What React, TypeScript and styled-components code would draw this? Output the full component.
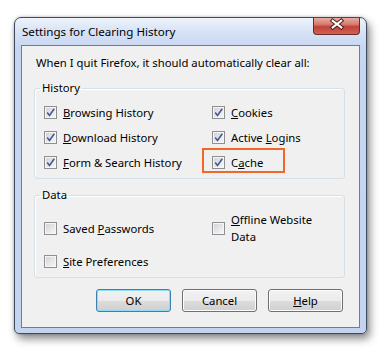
import React from "react";
import styled, { createGlobalStyle } from "styled-components";

const GlobalStyle = createGlobalStyle`
  html, body {
    margin: 0;
    padding: 0;
    background: #fff;
  }
  body {
    font-family: "Noto Sans", "Open Sans", sans-serif;
    font-size: 11.3px;
    color: #000;
  }
`;

const historyItems = [
  { pre: "", key: "B", post: "rowsing History" },
  { pre: "", key: "C", post: "ookies" },
  { pre: "", key: "D", post: "ownload History" },
  { pre: "Active ", key: "L", post: "ogins" },
  { pre: "", key: "F", post: "orm & Search History" },
  { pre: "C", key: "a", post: "che", highlight: true },
];

const CheckMark = () => (
  <svg width="11" height="11" viewBox="0 0 11 11">
    <path d="M2.2 5.6 L4.5 8.4 L9.3 1.8" fill="none" stroke="#465894" strokeWidth="1.6" />
  </svg>
);

const CloseGlyph = () => (
  <svg width="47" height="17" viewBox="0 0 47 17">
    <g strokeLinecap="square">
      <path d="M19.5 3.5 L28.5 10.5 M28.5 3.5 L19.5 10.5" stroke="#4a1814" strokeWidth="4.2" />
      <path d="M19.5 3.5 L28.5 10.5 M28.5 3.5 L19.5 10.5" stroke="#fff" strokeWidth="2.2" />
    </g>
  </svg>
);

const CheckItem = ({ checked, pre, accel, post, highlight }) => (
  <Item $highlight={highlight}>
    <Box>{checked && <CheckMark />}</Box>
    <ItemText>
      {pre}
      <u>{accel}</u>
      {post}
    </ItemText>
  </Item>
);

const App = () => {
  return (
    <>
      <GlobalStyle />
      <Page>
        <Window>
          <TitleBar>
            <Title>Settings for Clearing History</Title>
            <CloseButton>
              <CloseGlyph />
            </CloseButton>
          </TitleBar>
          <Client>
            <Intro>When I quit Firefox, it should automatically clear all:</Intro>
            <Group>
              <Legend>History</Legend>
              <HistoryGrid>
                {historyItems.map((item, index) => (
                  <CheckItem
                    key={index}
                    checked
                    pre={item.pre}
                    accel={item.key}
                    post={item.post}
                    highlight={item.highlight}
                  />
                ))}
              </HistoryGrid>
            </Group>
            <DataGroup>
              <Legend>Data</Legend>
              <DataGrid>
                <CheckItem pre="Saved " accel="P" post="asswords" />
                <CheckItem
                  pre=""
                  accel="O"
                  post={
                    <>
                      ffline Website
                      <br />
                      Data
                    </>
                  }
                />
                <CheckItem pre="" accel="S" post="ite Preferences" />
              </DataGrid>
            </DataGroup>
            <ButtonRow>
              <DialogButton $default>OK</DialogButton>
              <DialogButton>Cancel</DialogButton>
              <DialogButton>
                <u>H</u>elp
              </DialogButton>
            </ButtonRow>
          </Client>
        </Window>
      </Page>
    </>
  );
};

const Page = styled.div`
  padding: 17px 0 20px 14px;
`;

const Window = styled.div`
  width: 353px;
  box-sizing: border-box;
  border: 1px solid #3f4a5c;
  border-radius: 7px 7px 5px 5px;
  background: linear-gradient(#eef3fb 0px, #d6e2f5 14px, #c7d6f1 30px, #c4d3f0 100%);
  box-shadow: 3px 5px 9px rgba(0, 0, 0, 0.45), 0 0 3px rgba(0, 0, 0, 0.25);
`;

const TitleBar = styled.div`
  display: flex;
  justify-content: space-between;
  align-items: flex-start;
  height: 27px;
`;

const Title = styled.div`
  padding: 6px 0 0 7px;
  line-height: 16px;
  font-size: 11.6px;
`;

const CloseButton = styled.div`
  width: 47px;
  height: 17px;
  margin-right: 6px;
  box-sizing: border-box;
  border: 1px solid #6b2a24;
  border-top: none;
  border-radius: 0 0 4px 4px;
  background: linear-gradient(#e9aba2 0%, #d67a6f 40%, #c24236 55%, #cf6258 100%);
  display: flex;
  align-items: center;
  justify-content: center;

  svg {
    margin-top: -1px;
  }
`;

const Client = styled.div`
  margin: 0 6px 5px 6px;
  border: 1px solid #6d7c9c;
  background: #f0f0f0;
  padding: 0 14px 15px 12px;
`;

const Intro = styled.div`
  margin: 9px 0 9px 2px;
  line-height: 16px;
`;

const Group = styled.fieldset`
  margin: 0;
  padding: 4px 9px 3px 9px;
  border: 1px solid #d5dfe5;
  border-radius: 3px;
  box-shadow: inset 1px 1px 0 #fff;
`;

const DataGroup = styled(Group)`
  margin-top: 8px;
  padding-top: 8px;
`;

const Legend = styled.legend`
  padding: 0 2px;
  margin-left: -4px;
  line-height: 16px;
`;

const HistoryGrid = styled.div`
  display: grid;
  grid-template-columns: 168px 1fr;
  grid-auto-rows: 25px;
`;

const DataGrid = styled.div`
  display: grid;
  grid-template-columns: 168px 1fr;
  grid-template-rows: 34px 25px;
  row-gap: 4px;
`;

const Item = styled.label`
  position: relative;
  display: flex;
  align-items: center;
  gap: 6px;

  ${({ $highlight }) =>
    $highlight &&
    `
    &::after {
      content: "";
      position: absolute;
      left: -10px;
      top: -2px;
      width: 83px;
      height: 25px;
      box-sizing: border-box;
      border: 2px solid #f3662a;
    }
  `}
`;

const Box = styled.span`
  flex: none;
  width: 13px;
  height: 13px;
  box-sizing: border-box;
  border: 1px solid #8f8f8f;
  background: linear-gradient(135deg, #cdd0d5 0%, #e9eaec 60%, #f8f8f8 100%);
  box-shadow: inset 0 0 0 1px #f6f6f6;
  display: flex;
  align-items: center;
  justify-content: center;
`;

const ItemText = styled.span`
  line-height: 17px;
`;

const ButtonRow = styled.div`
  display: flex;
  justify-content: flex-end;
  gap: 11px;
  margin-top: 11px;
  padding-right: 2px;
`;

const DialogButton = styled.button`
  width: 75px;
  height: 23px;
  padding: 0;
  font-family: inherit;
  font-size: 11.3px;
  color: #000;
  border: 1px solid ${({ $default }) => ($default ? "#3c7fb1" : "#707070")};
  border-radius: 3px;
  background: linear-gradient(#f2f2f2 0%, #ebebeb 50%, #dddddd 50%, #cfcfcf 100%);
  box-shadow: inset 0 0 0 1px ${({ $default }) => ($default ? "#8fdcf7" : "#fcfcfc")};
`;

export default App;
